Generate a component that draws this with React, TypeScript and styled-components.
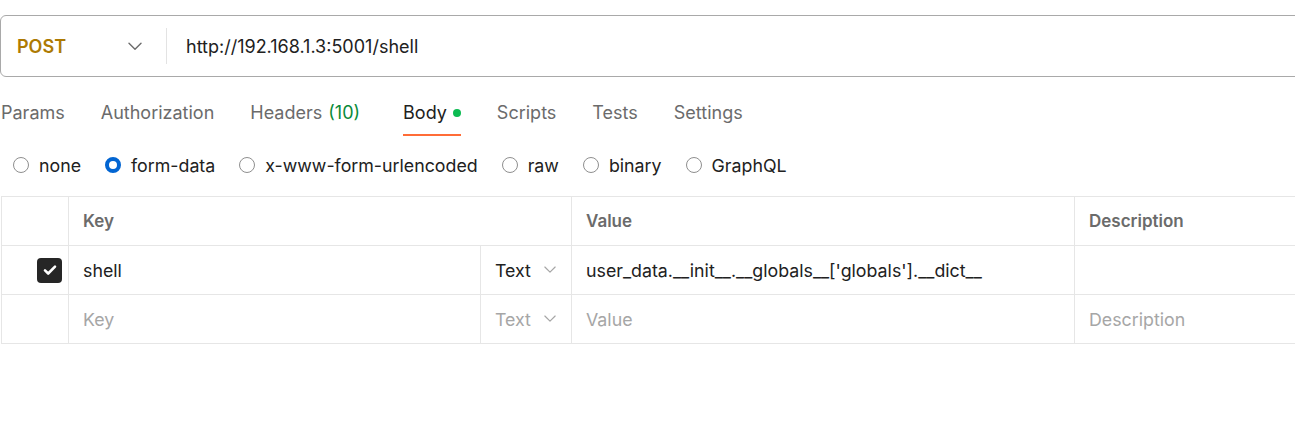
import React from "react";
import styled, { createGlobalStyle } from "styled-components";

const GlobalStyle = createGlobalStyle`
  html, body {
    margin: 0;
    padding: 0;
    background: #ffffff;
  }
  body {
    font-family: Inter, "Noto Sans", sans-serif;
    color: #212121;
  }
`;

type TabProps = { $active?: boolean };
type CellProps = { $span?: number; $muted?: boolean };

const tabs = ["Params", "Authorization", "Headers", "Body", "Scripts", "Tests", "Settings"];
const bodyTypes = ["none", "form-data", "x-www-form-urlencoded", "raw", "binary", "GraphQL"];

const Chevron = ({ size = 14, color = "#6b6b6b" }: { size?: number; color?: string }) => (
  <svg width={size} height={size * 0.6} viewBox="0 0 14 8" fill="none">
    <path d="M1 1l6 6 6-6" stroke={color} strokeWidth="1.4" strokeLinecap="round" strokeLinejoin="round" />
  </svg>
);

export default function App() {
  return (
    <Page>
      <GlobalStyle />
      <UrlBar>
        <MethodSelect>
          <Method>POST</Method>
          <Chevron />
        </MethodSelect>
        <Divider />
        <UrlText>http://192.168.1.3:5001/shell</UrlText>
      </UrlBar>

      <Tabs>
        {tabs.map((t) => (
          <Tab key={t} $active={t === "Body"}>
            {t}
            {t === "Headers" && <Count>(10)</Count>}
            {t === "Body" && <Dot />}
          </Tab>
        ))}
      </Tabs>

      <RadioRow>
        {bodyTypes.map((b) => (
          <RadioItem key={b}>
            <Radio $active={b === "form-data"} />
            {b}
          </RadioItem>
        ))}
      </RadioRow>

      <Table>
        <Cell />
        <HeadCell $span={2}>Key</HeadCell>
        <HeadCell>Value</HeadCell>
        <HeadCell>Description</HeadCell>

        <CheckCell>
          <Checkbox>
            <svg width="16" height="16" viewBox="0 0 16 16" fill="none">
              <path d="M3 8.4l3.2 3.1L13 4.6" stroke="#fff" strokeWidth="2.6" strokeLinecap="round" strokeLinejoin="round" />
            </svg>
          </Checkbox>
        </CheckCell>
        <Cell>shell</Cell>
        <TypeCell>
          Text <Chevron size={12} color="#a6a6a6" />
        </TypeCell>
        <Cell>user_data.__init__.__globals__['globals'].__dict__</Cell>
        <Cell />

        <Cell />
        <Cell $muted>Key</Cell>
        <TypeCell $muted>
          Text <Chevron size={12} color="#a6a6a6" />
        </TypeCell>
        <Cell $muted>Value</Cell>
        <Cell $muted>Description</Cell>
      </Table>
    </Page>
  );
}

const Page = styled.div`
  width: 1295px;
  height: 440px;
  overflow: hidden;
  padding-top: 15px;
  box-sizing: border-box;
`;

const UrlBar = styled.div`
  display: flex;
  align-items: center;
  height: 62px;
  width: 1330px;
  box-sizing: border-box;
  border: 1px solid #a9a9a9;
  border-radius: 6px;
`;

const MethodSelect = styled.div`
  width: 165px;
  box-sizing: border-box;
  display: flex;
  align-items: center;
  justify-content: space-between;
  padding: 0 24px 0 16px;
`;

const Method = styled.span`
  font-size: 18px;
  font-weight: 600;
  color: #ad7a03;
`;

const Divider = styled.div`
  width: 1px;
  height: 36px;
  background: #e3e3e3;
`;

const UrlText = styled.span`
  padding-left: 19px;
  font-size: 18px;
  color: #212121;
`;

const Tabs = styled.div`
  display: flex;
  gap: 36px;
  margin-top: 11px;
  height: 48px;
`;

const Tab = styled.div<TabProps>`
  display: flex;
  align-items: center;
  box-sizing: border-box;
  height: 48px;
  padding-top: 3px;
  font-size: 18px;
  color: ${(p) => (p.$active ? "#212121" : "#6b6b6b")};
  border-bottom: 2px solid ${(p) => (p.$active ? "#ff6c37" : "transparent")};
  &:first-child {
    margin-left: 1px;
  }
`;

const Count = styled.span`
  margin: 0 7px 0 6px;
  color: #0a8a3a;
`;

const Dot = styled.span`
  width: 8px;
  height: 8px;
  border-radius: 50%;
  background: #0cbb52;
  margin-left: 6px;
`;

const RadioRow = styled.div`
  display: flex;
  align-items: center;
  gap: 24px;
  height: 60px;
  box-sizing: border-box;
  padding: 0 0 2px 13px;
`;

const RadioItem = styled.label`
  display: flex;
  align-items: center;
  gap: 10px;
  font-size: 17.8px;
  color: #212121;
`;

const Radio = styled.span<TabProps>`
  width: 16px;
  height: 16px;
  box-sizing: border-box;
  border-radius: 50%;
  border: ${(p) => (p.$active ? "4.5px solid #0265d2" : "1px solid #8f8f8f")};
  background: #fff;
`;

const Table = styled.div`
  display: grid;
  grid-template-columns: 67px 412px 91px 503px 260px;
  grid-auto-rows: 49px;
  margin-left: 1px;
  border-top: 1px solid #e6e6e6;
  border-left: 1px solid #e6e6e6;
  width: 1340px;
`;

const Cell = styled.div<CellProps>`
  grid-column: span ${(p) => p.$span ?? 1};
  display: flex;
  align-items: center;
  padding-left: 14px;
  box-sizing: border-box;
  border-right: 1px solid #e6e6e6;
  border-bottom: 1px solid #e6e6e6;
  font-size: 17.8px;
  color: ${(p) => (p.$muted ? "#a6a6a6" : "#212121")};
  white-space: nowrap;
`;

const HeadCell = styled(Cell)`
  font-size: 17px;
  font-weight: 600;
  color: #6b6b6b;
`;

const CheckCell = styled(Cell)`
  justify-content: flex-end;
  padding: 0 6px 0 0;
`;

const TypeCell = styled(Cell)`
  gap: 13px;
`;

const Checkbox = styled.span`
  width: 25px;
  height: 25px;
  border-radius: 4px;
  background: #262626;
  display: flex;
  align-items: center;
  justify-content: center;
`;
